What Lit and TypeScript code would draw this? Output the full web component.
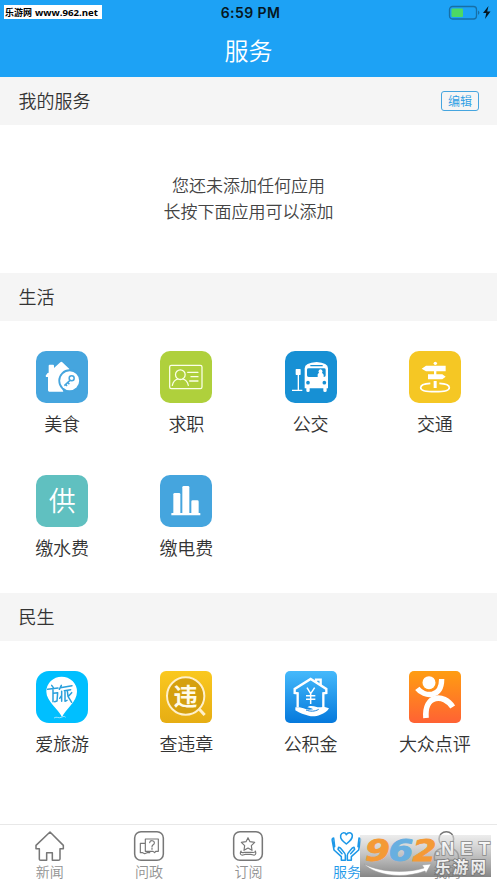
import { LitElement, html, css, svg } from "lit";
import { customElement, property } from "lit/decorators.js";

const glyphs: Record<string, unknown> = {
  food: svg`
    <path fill="#fff" d="M29 74 34 67 38 65V44q0-3 3-3h10q3 0 3 3v7L73 34q3-3 6 0l22 21-14 10-14 18 1 18 8 21H40q-4 0-4-4V78h-6z"/>
    <circle cx="101" cy="89" r="34" fill="#45a5de"/><circle cx="101" cy="89" r="28.500" fill="#fff"/>
    <g fill="none" stroke="#45a5de" stroke-width="4.500"><circle cx="107" cy="82" r="7.500"/><path d="M102 88 85 104M95 94l5 6M89 100l4 5"/></g>`,
  job: svg`<g fill="none" stroke="#fbffe8" stroke-width="3.800" stroke-linecap="round">
    <rect x="29" y="43" width="97" height="70" rx="5"/>
    <circle cx="61" cy="71" r="14.500"/><path d="M37 103c2-10 8-17 17-19M68 84c9 2 15 9 17 19M83 64h31M93 77h21M89 90h25"/></g>`,
  bus: svg`<g fill="#fff"><rect x="32" y="54" width="15" height="18" rx="2"/><path d="M38 72h4v44h10v4H21v-4h17z"/>
    <path fill-rule="evenodd" d="M59 112V52q0-17 36-19 34 2 34 19v60h-4v7q0 4-5 4t-5-4v-7H74v7q0 4-5 4t-5-4v-7zM66 56v17q0 5 5 5h46q5 0 5-5V56q0-4-5-4H71q-5 0-5 4zM76 42v4h37v-4z"/></g>
    <g fill="#1790d4"><circle cx="69" cy="95" r="5.500"/><circle cx="118" cy="95" r="5.500"/></g>
    <path fill="#fff" d="M98 79V70l4-5a6 6 0 1 1 9 0l5 6v8z"/>`,
  traffic: svg`<g fill="#fff"><circle cx="79" cy="37" r="5"/><path d="M38 53 51 44h59v17H51zM57 70h43l10 7-10 8H57zM75 59h7v14h-7zM74 90h9v21h-9z"/></g>
    <path d="M64 97C46 98 35 103 35 110c0 8 18 12 43 12s43-4 43-12c0-7-11-12-30-13" fill="none" stroke="#fff" stroke-width="5"/>`,
  power: svg`<g fill="#fff"><rect x="34" y="114" width="87" height="7" rx="1"/><rect x="40" y="54" width="21" height="64" rx="4"/><rect x="67" y="33" width="21" height="84" rx="4"/><rect x="94" y="76" width="22" height="42" rx="4"/></g>`,
  travel: svg`<path fill="#fff" d="M78 138C67 113 31 91 31 62a46 45 0 0 1 92 0c0 29-33 52-45 76z"/>
    <g fill="none" stroke="#2aa0dc" stroke-width="4.500" stroke-linecap="round" stroke-linejoin="round">
    <path d="m47 43 5 7M35 55l31-4M51 54v38M52 67l13-2-2 25-7 2M76 43l-6 12M73 50l35-6M85 59l19-3M77 61v30M77 73l-6 9M87 62v29l6-3M94 59l2 17 11 18M107 65l-9 10"/></g>
    <path d="M54 141c8-6 14 2 22-2s10-3 13 0" fill="none" stroke="#dff5ff" stroke-width="2"/>`,
  violation: svg`<circle cx="77" cy="75" r="58" fill="#d5a00e"/><circle cx="77" cy="75" r="56" fill="none" stroke="#fff0ca" stroke-width="6"/><path d="m118 115 16 17" stroke="#fff0ca" stroke-width="9"/>`,
  fund: svg`<g fill="none" stroke="#fff" stroke-width="7" stroke-linejoin="miter">
    <path d="M38 109V67l-9-1V54l48-30 47 30v12l-9 1v42"/><path d="M93 33v-7h14v17"/></g>
    <path d="m66 50 11 18 12-18M77 68v31M63 74h28M63 85h28" stroke="#fff" stroke-width="4.500" fill="none"/>
    <path fill="#fff" d="M31 109c12-1 20 1 31 5 7 3 14 3 23 1-6-4-13-5-18-6 6-6 17-5 28-1 6 2 12 0 22-1l15 5c-4 9-14 15-26 19-12 5-24 6-35 3-13-3-26-7-40-16z"/>
    <path d="M63 117c13 5 26 5 38-2" fill="none" stroke="#1681df" stroke-width="3"/>`,
  review: svg`<g fill="none" stroke="#fff"><path stroke-width="16" d="M25 52C45 79 98 82 98 24"/><path stroke-width="17" d="M51 141C45 70 105 67 131 108"/></g><circle cx="60" cy="35" r="24" fill="#ff9718"/><circle cx="60" cy="35" r="19.500" fill="#fff"/>`,
  home: svg`<path d="M48 17 6 57v10h10v32q0 3 4 3h18V79h17v23h18q5 0 5-4V67h10V57z"/>`,
  ask: svg`<rect x="5" y="16" width="86" height="86" rx="19"/><g stroke-width="3.500"><path d="M37 38h39v37H68l-3 4-5-4H37zM37 51H22v28h7l6 3 7-3h8v-4"/><path d="M50 49c1-8 15-8 14 1 0 6-7 5-7 11M57 65v4"/></g>`,
  book: svg`<rect x="5" y="16" width="86" height="86" rx="19"/><path stroke-width="3.500" d="m48 34 6 12 14 2-10 10 2 14-12-7-12 7 2-14-10-10 14-2zM27 74c0 6 5 5 10 4h23c5 1 9 1 10-4M27 74c-3 5-3 11 2 12 6 1 6-2 11-2h16c6 0 6 3 12 2 4-1 4-7 2-12"/>`,
  care: svg`<path d="M46 53C34 43 27 37 29 27c3-10 14-10 17-2 4-8 16-8 18 2 1 10-6 16-18 26zM8 35c-5 0-5 5-4 9l5 27 22 20v11h12V87c0-8-8-13-15-22l-5-2-2 6 12 13M11 61 8 35M84 35c5 0 5 5 4 9l-5 27-22 20v11H49V87c0-8 8-13 15-22l5-2 2 6-12 13M81 61l3-26"/>`,
  me: svg`<circle cx="46" cy="38" r="22"/><path d="M11 102c-6-27 13-38 35-38s41 11 36 38z"/>`,
};

@customElement("service-tile")
class ServiceTile extends LitElement {
  @property() icon = "";
  @property() label = "";
  @property() glyph = "";
  static styles = css`
    :host { display: flex; flex-direction: column; align-items: center; height: 124px; box-sizing: border-box; padding-top: 30px; }
    .tile { width: 52px; height: 52px; border-radius: 10px; display: grid; place-items: center; overflow: hidden; color: #fff; }
    .tile > * { grid-area: 1 / 1; }
    svg { width: 52px; height: 52px; }
    .food, .power { background: #45a5de; }
    .job { background: #afd03c; }
    .bus { background: #1790d4; }
    .traffic { background: #f5c724; }
    .water { background: #60c0c0; }
    .travel { background: #00bfff; border-radius: 13px; }
    .violation { background: linear-gradient(#fac81f, #e6ad13); border-radius: 6px; }
    .fund { background: linear-gradient(#45b9fb, #0579dc); border-radius: 5px; }
    .review { background: linear-gradient(#ff9d11, #ff6234); border-radius: 5px; }
    .mark { font-size: 27px; line-height: 50px; padding-bottom: 2px; font-weight: 350; }
    .violation .mark { font-size: 24px; font-weight: 700; padding-right: 2px; padding-bottom: 4px; line-height: 46px; color: #fffbe8; }
    .label { margin-top: 6px; font-size: 18px; line-height: 28px; color: #333; white-space: nowrap; }
  `;
  render() {
    return html`<div class="tile ${this.icon}">
        ${glyphs[this.icon] ? html`<svg viewBox="0 0 156 156">${glyphs[this.icon]}</svg>` : ""}
        ${this.glyph ? html`<span class="mark">${this.glyph}</span>` : ""}
      </div><div class="label">${this.label}</div>`;
  }
}

@customElement("site-mark")
class SiteMark extends LitElement {
  static styles = css`
    :host { display: block; width: 139px; height: 43px; }
    svg { display: block; overflow: visible; }
    .num { font: italic 700 31px "DejaVu Sans", sans-serif; }
    .net { font: 700 18.5px "Liberation Sans", sans-serif; }
    .cn { font: 700 15.5px "Noto Sans CJK SC", sans-serif; }
  `;
  render() {
    return html`<svg width="139" height="43" viewBox="0 0 139 43">
      <defs>
        <linearGradient id="shade" x2="0" y2="1"><stop offset="0" stop-color="#e0e0e0" stop-opacity=".6"/><stop offset="1" stop-color="#707070" stop-opacity=".85"/></linearGradient>
        <linearGradient id="silver" x2="0" y2="1"><stop stop-color="#fff"/><stop offset="1" stop-color="#ddd"/></linearGradient>
      </defs>
      <rect x="1" y="1" width="131" height="42" fill="url(#shade)"/>
      <path d="M5 30C20 38 46 40 65 34l-2-3 9-1-5 9-1-2C44 45 18 42 5 30z" fill="#fff" stroke="#999" stroke-width=".5"/>
      <g class="num" stroke-width=".8">
        <text x="6" y="26.500" textLength="25" lengthAdjust="spacingAndGlyphs" fill="#f49a36" stroke="#f49a36">9</text>
        <text x="29.500" y="26.500" textLength="25" lengthAdjust="spacingAndGlyphs" fill="#68afe0" stroke="#68afe0">6</text>
        <text x="53.500" y="26.500" textLength="24" lengthAdjust="spacingAndGlyphs" fill="#f49a36" stroke="#f49a36">2</text>
      </g>
      <g class="net" fill="url(#silver)" stroke="#888" stroke-width="1.600" paint-order="stroke">
        <text x="76" y="21">.</text><text x="82" y="20.500" textLength="49" lengthAdjust="spacing">NET</text>
      </g>
      <text class="cn" x="76" y="38.500" textLength="51" lengthAdjust="spacing" fill="url(#silver)" stroke="#777" stroke-width="1.600" paint-order="stroke">乐游网</text>
    </svg>`;
  }
}

@customElement("app-root")
class AppRoot extends LitElement {
  static styles = css`
    :host { display: flex; flex-direction: column; position: relative; height: 883px; overflow: hidden; background: #fff; font-family: "Noto Sans CJK SC", sans-serif; font-weight: 350; color: #333; }
    header { height: 77px; background: #1da2f5; flex: none; }
    .status { display: grid; grid-template-columns: 1fr auto 1fr; align-items: center; height: 26px; padding: 0 5px 0 4px; color: #061722; }
    .source { justify-self: start; width: 98px; height: 14px; margin-top: -2px; background: #fff; color: #000; }
    .source svg { display: block; }
    .cn { font: 700 9px "Noto Sans CJK SC", sans-serif; }
    .url { font: 700 9.5px "Open Sans", sans-serif; }
    .clock { font: 600 14px/18px Inter, sans-serif; letter-spacing: .4px; padding-left: 5px; }
    .battery { justify-self: end; }
    h1 { margin: 0; text-align: center; color: #fff; font-size: 24px; line-height: 48px; font-weight: 350; }
    .bar { height: 48px; background: #f5f5f5; display: flex; align-items: center; justify-content: space-between; padding: 0 18px 0 18.5px; flex: none; box-sizing: border-box; font-size: 18px; }
    .bar > span { padding-bottom: 2px; }
    .edit { box-sizing: border-box; width: 38px; height: 20px; border: 1.5px solid #45a5df; border-radius: 3px; color: #2b9de4; font-size: 12px; line-height: 17px; text-align: center; }
    .empty { height: 148px; box-sizing: border-box; padding-bottom: 2px; display: flex; flex-direction: column; justify-content: center; text-align: center; font-size: 17px; line-height: 26px; color: #444; flex: none; }
    .grid { display: grid; grid-template-columns: repeat(4, 1fr); flex: none; }
    .life { height: 272px; align-content: start; }
    .tabs { margin-top: auto; height: 59px; box-sizing: border-box; border-top: 1px solid #e8e8e8; display: grid; grid-template-columns: repeat(5, 1fr); flex: none; }
    .tab { display: flex; flex-direction: column; align-items: center; color: #777; font-size: 14px; line-height: 18px; padding-top: 2px; }
    .tab svg { width: 32px; height: 35px; fill: none; stroke: currentColor; stroke-width: 4.6; stroke-linejoin: round; stroke-linecap: round; }
    .tab span { color: #929292; }
    .active, .active span { color: #1d98e8; }
    .active { padding-right: 2px; }
    site-mark { position: absolute; left: 359px; top: 834px; }
  `;
  tile(icon: string, label: string, glyph = "") {
    return html`<service-tile .icon=${icon} .label=${label} .glyph=${glyph}></service-tile>`;
  }
  tab(icon: string, label: string, active = false) {
    return html`<div class="tab ${active ? "active" : ""}"><svg viewBox="0 2 96 105">${glyphs[icon]}</svg><span>${label}</span></div>`;
  }
  render() {
    return html`
      <header>
        <div class="status">
          <div class="source"><svg width="98" height="14"><text class="cn" x="1" y="11" textLength="27">乐游网</text><text class="url" x="31" y="10.500" textLength="63" lengthAdjust="spacingAndGlyphs">www.962.net</text></svg></div>
          <div class="clock">6:59 PM</div>
          <svg class="battery" width="44" height="16" viewBox="0 0 44 16">
            <rect x="1.500" y="1.500" width="27" height="12.500" rx="3" fill="none" stroke="#176fa6" stroke-width="1.300"/>
            <rect x="3.500" y="3.500" width="11.500" height="8.500" rx="1" fill="#4cd964"/><path d="M30 5.500q3 2.200 0 4.500z" fill="#176fa6"/>
            <path d="m40.500 1-5.500 7h3.300L37 14l5.500-7.500h-3.300z" fill="#061722"/>
          </svg>
        </div>
        <h1>服务</h1>
      </header>
      <div class="bar"><span>我的服务</span><div class="edit">编辑</div></div>
      <div class="empty"><div>您还未添加任何应用</div><div>长按下面应用可以添加</div></div>
      <div class="bar"><span>生活</span></div>
      <div class="grid life">
        ${this.tile("food", "美食")}${this.tile("job", "求职")}${this.tile("bus", "公交")}${this.tile("traffic", "交通")}
        ${this.tile("water", "缴水费", "供")}${this.tile("power", "缴电费")}
      </div>
      <div class="bar"><span>民生</span></div>
      <div class="grid">
        ${this.tile("travel", "爱旅游")}${this.tile("violation", "查违章", "违")}${this.tile("fund", "公积金")}${this.tile("review", "大众点评")}
      </div>
      <nav class="tabs">
        ${this.tab("home", "新闻")}${this.tab("ask", "问政")}${this.tab("book", "订阅")}${this.tab("care", "服务", true)}${this.tab("me", "我的")}
      </nav>
      <site-mark></site-mark>`;
  }
}
